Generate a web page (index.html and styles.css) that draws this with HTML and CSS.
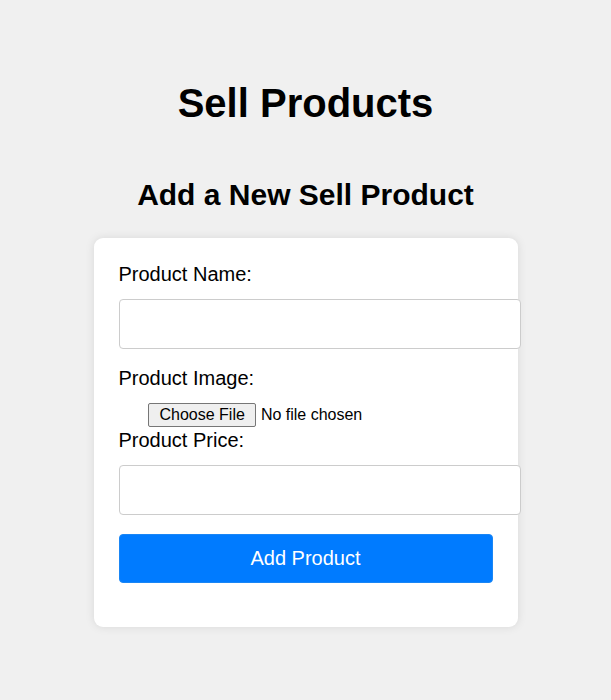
FILE: index.html
```html
<!DOCTYPE html>
<html>
<head>
<meta charset="utf-8">
<title>Sell Products</title>
<link rel="stylesheet" href="styles.css">
</head>
<body>
<header class="page-header">
  <h1 class="title">Sell Products</h1>
</header>
<main class="page-main">
  <h2 class="subtitle">Add a New Sell Product</h2>
  <form class="card">
    <label class="field-label" for="name">Product Name:</label>
    <input class="text-input" type="text" id="name">
    <label class="field-label" for="image">Product Image:</label>
    <input class="file-input" type="file" id="image">
    <label class="field-label" for="price">Product Price:</label>
    <input class="text-input" type="text" id="price">
    <button class="submit-btn" type="button">Add Product</button>
  </form>
</main>
</body>
</html>
```
FILE: styles.css
```css
html, body {
  margin: 0;
  padding: 0;
}
body {
  background: #f0f0f0;
  font-family: "Liberation Sans", Arial, sans-serif;
  font-size: 20px;
  color: #000;
}
.page-header {
  padding-top: 80px;
}
.title {
  margin: 0;
  font-size: 40px;
  line-height: 46px;
  text-align: center;
  font-weight: bold;
}
.page-main {
  padding-top: 51px;
  padding-bottom: 40px;
}
.subtitle {
  margin: 0 0 26px;
  font-size: 30px;
  line-height: 35px;
  text-align: center;
  font-weight: bold;
}
.card {
  box-sizing: border-box;
  width: 424px;
  margin: 0 auto;
  padding: 25px;
  background: #fff;
  border-radius: 9px;
  box-shadow: 0 0 10px rgba(0, 0, 0, 0.1);
}
.field-label {
  display: block;
  line-height: 23px;
  margin-bottom: 13px;
}
.text-input {
  display: block;
  box-sizing: border-box;
  width: 402px;
  height: 50px;
  margin: 0 0 18px;
  padding: 0 12px;
  border: 1px solid #ccc;
  border-radius: 4px;
  font-family: "Liberation Sans", Arial, sans-serif;
  font-size: 16px;
  background: #fff;
}
.file-input {
  display: block;
  margin: 0;
  padding: 0 0 2px 29px;
  font-family: "Liberation Sans", Arial, sans-serif;
  font-size: 16px;
  line-height: 18px;
  color: #000;
}
.file-input::file-selector-button {
  font-family: "Liberation Sans", Arial, sans-serif;
  font-size: 16px;
  line-height: 18px;
  padding: 2px 10px 2px 11px;
  margin-right: 5px;
  border: 1px solid #767676;
  border-radius: 2px;
  background: #efefef;
  color: #000;
}
.submit-btn {
  display: block;
  box-sizing: border-box;
  width: 374px;
  height: 49px;
  margin: 19px 0 19px;
  padding: 0;
  border: 1px solid #1a86f5;
  border-radius: 4px;
  background: #007bff;
  color: #fff;
  font-family: "Liberation Sans", Arial, sans-serif;
  font-size: 20px;
  cursor: pointer;
}
.text-input:last-of-type {
  margin-bottom: 0;
}
```
